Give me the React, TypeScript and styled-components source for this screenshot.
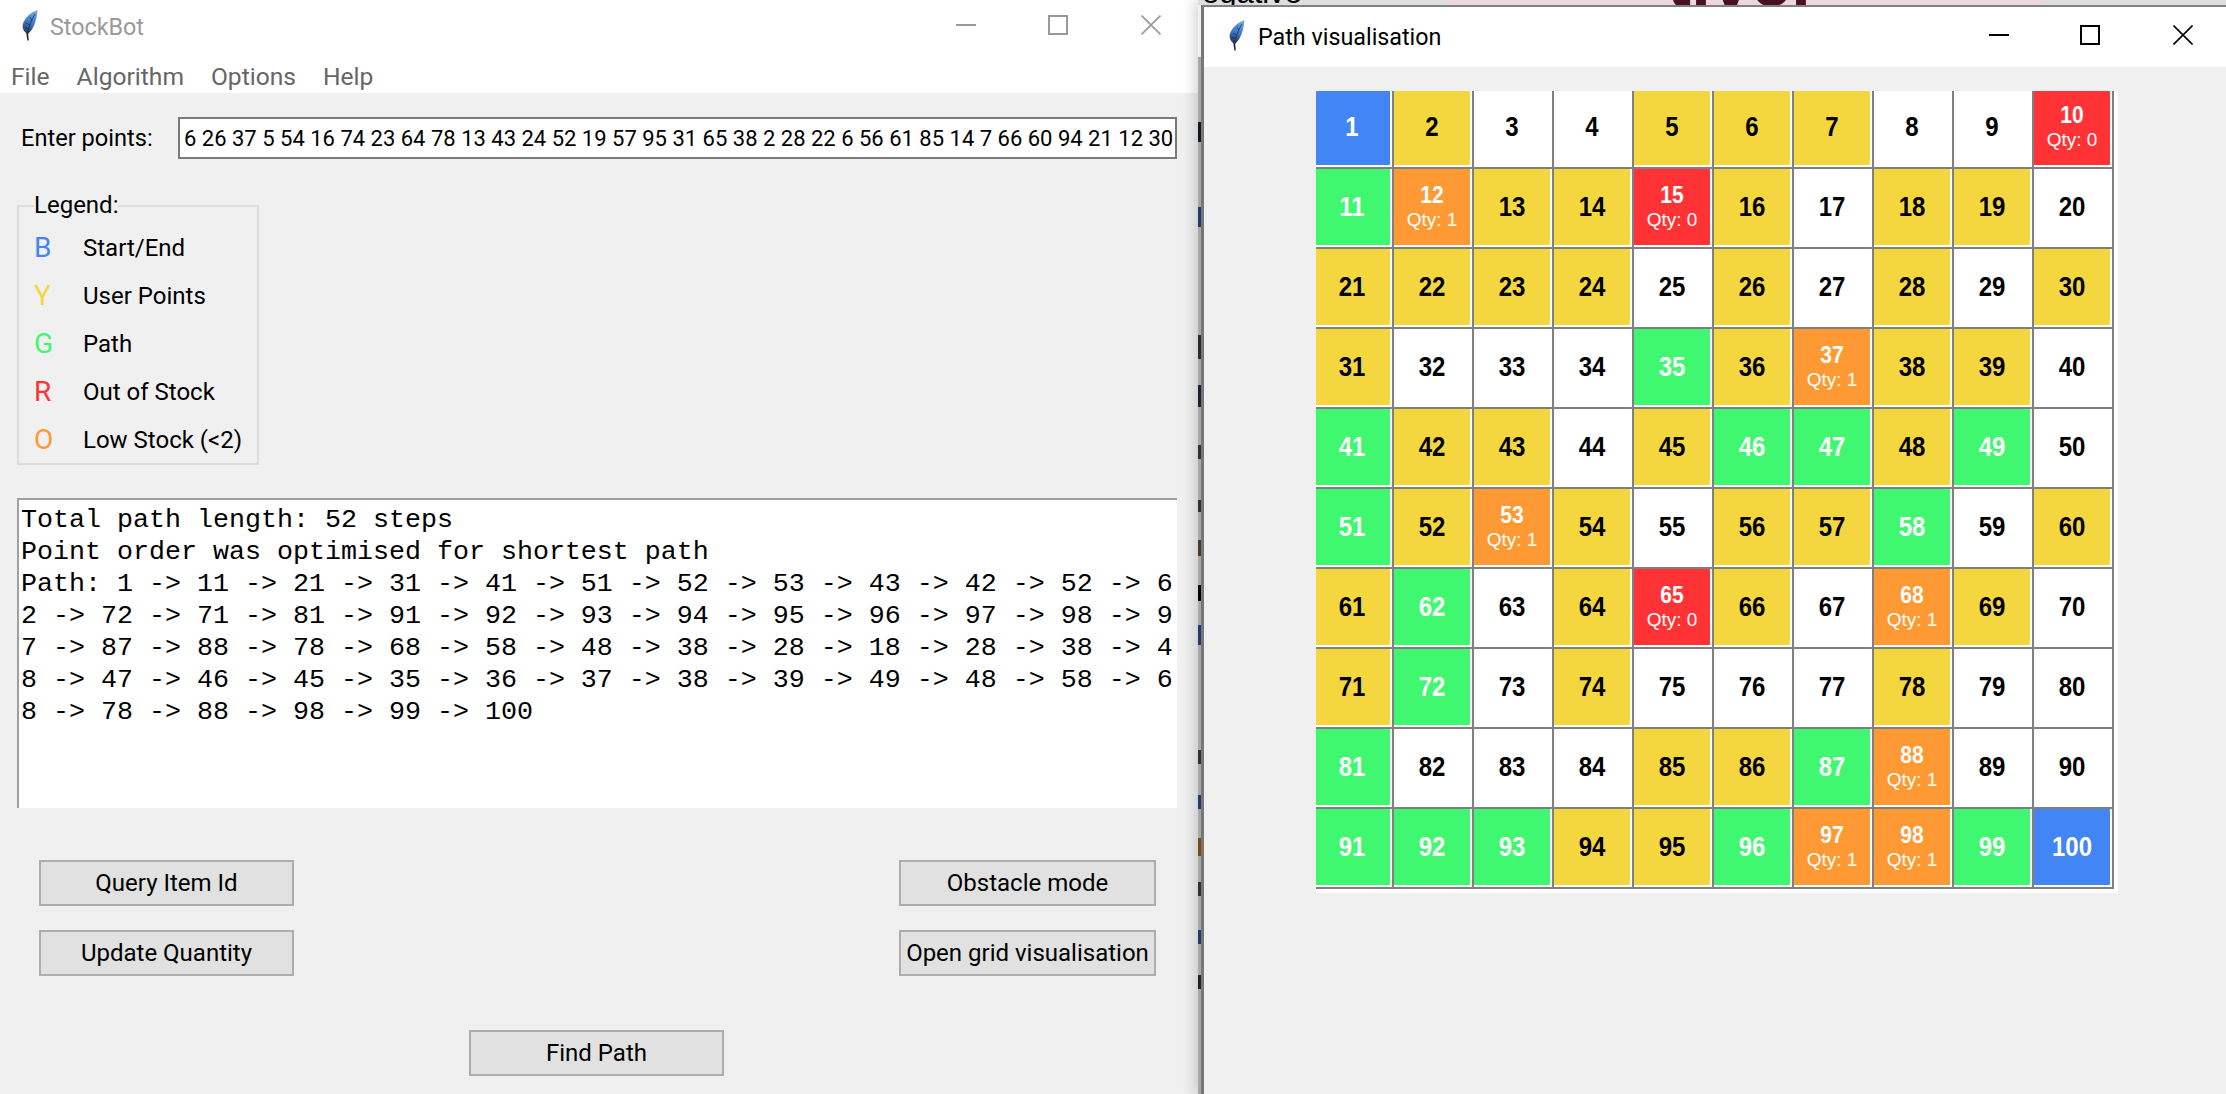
import React, { useId } from 'react';
import styled, { createGlobalStyle } from 'styled-components';

const Global = createGlobalStyle`
  html, body { margin: 0; padding: 0; width: 2226px; height: 1094px; overflow: hidden; background: #f0f0f0; }
  #root { width: 2226px; height: 1094px; }
  * { box-sizing: border-box; }
`;

const UI_FONT = `Roboto, "Open Sans", "Liberation Sans", sans-serif`;
const COLORS = { b: '#4285f5', y: '#f4d63e', g: '#40f870', r: '#ff3336', o: '#ff9933', w: '#ffffff' } as const;
type Kind = keyof typeof COLORS;

const Desktop = styled.div`
  display: flex;
  width: 2226px;
  height: 1094px;
  font-family: ${UI_FONT};
  overflow: hidden;
`;

const MainWindow = styled.div`
  width: 1198px;
  height: 100%;
  display: flex;
  flex-direction: column;
  background: #f0f0f0;
`;

const TitleBar = styled.div<{ $height: number; $inset: number; $gap: number; $lift: number; $dim?: boolean }>`
  flex: none;
  height: ${(p) => p.$height}px;
  padding-left: ${(p) => p.$inset}px;
  padding-bottom: ${(p) => p.$lift}px;
  background: #fff;
  display: flex;
  align-items: center;
  gap: ${(p) => p.$gap}px;
  color: ${(p) => (p.$dim ? '#999999' : '#000000')};
  font-size: 23.3px;
`;

const FeatherBox = styled.span`
  display: flex;
  margin-bottom: 4px;
`;

const TitleText = styled.span`
  flex: 1;
  white-space: nowrap;
`;

const Controls = styled.div<{ $pad: number }>`
  display: flex;
  align-items: center;
  padding-right: ${(p) => p.$pad}px;
  margin-bottom: 4px;
`;

const ControlSlot = styled.span<{ $margin: number }>`
  display: flex;
  width: 20px;
  height: 20px;
  margin-left: ${(p) => p.$margin}px;
`;

const MenuBar = styled.div`
  flex: none;
  height: 33px;
  background: #fff;
  padding-left: 11px;
  display: flex;
  align-items: center;
  gap: 27px;
  color: #666666;
  font-size: 24.6px;
`;

const Body = styled.div`
  flex: 1;
  display: flex;
  flex-direction: column;
`;

const InputRow = styled.div`
  margin-top: 24px;
  height: 42px;
  display: flex;
  align-items: center;
  padding-left: 21px;
  font-size: 23.6px;
  color: #000;
`;

const InputLabel = styled.label`
  width: 157px;
  white-space: nowrap;
`;

const PointsInput = styled.div`
  width: 999px;
  height: 42px;
  border: 2px solid #7a7a7a;
  background: #fff;
  padding-left: 4px;
  display: flex;
  align-items: center;
  white-space: nowrap;
  overflow: hidden;
  font-size: 22px;
`;

const LegendBox = styled.fieldset`
  margin: 33px 0 0 17px;
  padding: 12px 0 12px 15px;
  width: 242px;
  border: 2px solid #dcdcdc;
  font-size: 24px;
  color: #000;
`;

const LegendTitle = styled.legend`
  margin-left: 0;
  padding: 0;
  line-height: 27px;
`;

const LegendList = styled.div`
  display: flex;
  flex-direction: column;
  gap: 20px;
`;

const LegendRow = styled.div`
  height: 28px;
  display: grid;
  grid-template-columns: 49px 1fr;
  align-items: center;
  white-space: nowrap;
`;

const LegendKey = styled.span<{ $kind: Kind }>`
  color: ${(p) => COLORS[p.$kind]};
  font-size: 28px;
`;

const Output = styled.div`
  margin: 33px 0 0 17px;
  width: 1160px;
  height: 310px;
  background: #fff;
  border-top: 2px solid #a0a0a0;
  border-left: 2px solid #a0a0a0;
  padding: 4px 0 0 2px;
  overflow: hidden;
  font-family: "Liberation Mono", "Courier New", monospace;
  font-size: 26.67px;
  line-height: 32px;
  color: #000;
  white-space: pre;
`;

const ActionGrid = styled.div`
  margin-top: 52px;
  padding: 0 42px 0 39px;
  display: flex;
  justify-content: space-between;
`;

const ActionColumn = styled.div`
  display: flex;
  flex-direction: column;
  gap: 24px;
`;

const ActionButton = styled.button<{ $wide?: boolean }>`
  width: ${(p) => (p.$wide ? 257 : 255)}px;
  height: 46px;
  padding: 0;
  background: #e1e1e1;
  border: 2px solid #adadad;
  font-family: ${UI_FONT};
  font-size: 24px;
  color: #000;
  white-space: nowrap;
`;

const FindRow = styled.div`
  margin-top: 54px;
  padding-left: 469px;
`;

const RightColumn = styled.div`
  position: relative;
  width: 1028px;
  height: 100%;
  display: flex;
  flex-direction: column;
  box-shadow: -4px 0 12px rgba(0, 0, 0, 0.16);
`;

const BehindStrip = styled.div`
  flex: none;
  height: 5px;
  display: flex;
  overflow: hidden;
`;

const BehindPage = styled.div<{ $w: number; $bg: string; $pad: number }>`
  flex: none;
  width: ${(p) => p.$w}px;
  height: 5px;
  padding-left: ${(p) => p.$pad}px;
  background: ${(p) => p.$bg};
  overflow: hidden;
`;

const BehindText = styled.div`
  margin-top: -22px;
  font-family: "Liberation Sans", sans-serif;
  font-size: 31px;
  line-height: 30px;
  color: #000;
  white-space: nowrap;
`;

const BehindHeading = styled.div`
  margin-top: -44px;
  font-family: "Liberation Sans", sans-serif;
  font-weight: 700;
  font-size: 72px;
  line-height: 50px;
  color: #4a1028;
  white-space: nowrap;
`;

const Sliver = styled.div`
  position: absolute;
  left: 0;
  top: 57px;
  bottom: 0;
  width: 3px;
  background: #a8a8a8;
  overflow: hidden;
`;

const SliverTick = styled.i<{ $top: number; $h: number; $c: string }>`
  position: absolute;
  left: 0;
  width: 3px;
  top: ${(p) => p.$top - 57}px;
  height: ${(p) => p.$h}px;
  background: ${(p) => p.$c};
`;

const VisualWindow = styled.div`
  flex: 1;
  margin-left: 3px;
  border-top: 2px solid #808080;
  border-left: 3px solid #777777;
  background: #f0f0f0;
  display: flex;
  flex-direction: column;
`;

const CanvasArea = styled.div`
  padding: 24px 0 0 112px;
`;

const GridCanvas = styled.div`
  width: 802px;
  height: 802px;
  background: #fff;
  overflow: hidden;
`;

const CellGrid = styled.div`
  margin: -2px;
  display: grid;
  grid-template-columns: repeat(10, 80px);
  grid-auto-rows: 80px;
`;

const Cell = styled.div`
  padding: 0 2px 2px 0;
  border-right: 2px solid #808080;
  border-bottom: 2px solid #808080;
  background: #fff;
`;

const CellFill = styled.div<{ $kind: Kind }>`
  width: 100%;
  height: 100%;
  background: ${(p) => COLORS[p.$kind]};
  color: ${(p) => (p.$kind === 'y' || p.$kind === 'w' ? '#000' : '#fff')};
  display: flex;
  flex-direction: column;
  align-items: center;
  justify-content: center;
  font-family: "Liberation Sans", Arial, sans-serif;
`;

const CellNumber = styled.span<{ $small?: boolean }>`
  display: block;
  transform: scaleY(1.12);
  font-weight: 700;
  font-size: ${(p) => (p.$small ? 21 : 24)}px;
  line-height: ${(p) => (p.$small ? 25 : 28)}px;
`;

const CellQty = styled.span`
  font-size: 19px;
  line-height: 25px;
`;

function Feather() {
  const id = useId();
  return (
    <FeatherBox>
      <svg width="18" height="32" viewBox="0 0 18 32" fill="none">
        <defs>
          <linearGradient id={id} x1="14" y1="0" x2="4" y2="26" gradientUnits="userSpaceOnUse">
            <stop offset="0" stopColor="#7fb0e8" />
            <stop offset="0.55" stopColor="#3a74c4" />
            <stop offset="1" stopColor="#23282f" />
          </linearGradient>
        </defs>
        <path d="M16.5 1C10 3 3.5 9 1.8 15.5C1 19 3 22.5 5.2 24L6.4 31.5L7.8 31.5L7.2 24.5C12 21 15.8 12 16.5 1Z" fill={`url(#${id})`} />
        <path d="M14 5C10 11 7.5 18 6.8 25M5 14L8.5 16M4 18L7.6 20M9 8L11 11" stroke="#1d2a3d" strokeWidth="1" opacity="0.7" />
      </svg>
    </FeatherBox>
  );
}

function WinIcon({ kind, color }: { kind: 'min' | 'max' | 'close'; color: string }) {
  return (
    <svg width="20" height="20" viewBox="0 0 20 20" fill="none" stroke={color} strokeWidth="2">
      {kind === 'min' && <path d="M0 10H20" />}
      {kind === 'max' && <rect x="1" y="1" width="18" height="18" />}
      {kind === 'close' && <path d="M0.5 0.5L19.5 19.5M19.5 0.5L0.5 19.5" strokeWidth="1.6" />}
    </svg>
  );
}

const LEGEND: [Kind, string, string][] = [
  ['b', 'B', 'Start/End'],
  ['y', 'Y', 'User Points'],
  ['g', 'G', 'Path'],
  ['r', 'R', 'Out of Stock'],
  ['o', 'O', 'Low Stock (<2)'],
];

const OUTPUT = [
  'Total path length: 52 steps',
  'Point order was optimised for shortest path',
  'Path: 1 -> 11 -> 21 -> 31 -> 41 -> 51 -> 52 -> 53 -> 43 -> 42 -> 52 -> 6',
  '2 -> 72 -> 71 -> 81 -> 91 -> 92 -> 93 -> 94 -> 95 -> 96 -> 97 -> 98 -> 9',
  '7 -> 87 -> 88 -> 78 -> 68 -> 58 -> 48 -> 38 -> 28 -> 18 -> 28 -> 38 -> 4',
  '8 -> 47 -> 46 -> 45 -> 35 -> 36 -> 37 -> 38 -> 39 -> 49 -> 48 -> 58 -> 6',
  '8 -> 78 -> 88 -> 98 -> 99 -> 100',
].join('\n');

const MAP = [
  'bywwyyywwr',
  'goyyrywyyw',
  'yyyywywywy',
  'ywwwgyoyyw',
  'gyywyggygw',
  'gyoywyygwy',
  'ygwyrywoyw',
  'ygwywwwyww',
  'gwwwyygoww',
  'gggyygoogb',
];

const TICKS: [number, number, string][] = [
  [122, 20, '#101820'], [207, 20, '#1f3a70'], [335, 24, '#2a2a2a'], [385, 22, '#1a2030'], [445, 14, '#303030'],
  [500, 12, '#303030'], [540, 16, '#4a3a2a'], [585, 16, '#000000'], [625, 20, '#1f3a70'], [750, 14, '#303030'],
  [795, 14, '#1f3a70'], [838, 18, '#7a4a10'], [882, 14, '#303030'], [930, 14, '#1f3a70'], [975, 14, '#202020'],
];

export default function App() {
  return (
    <Desktop>
      <Global />
      <MainWindow>
        <TitleBar $height={60} $inset={21} $gap={11} $lift={6} $dim>
          <Feather />
          <TitleText>StockBot</TitleText>
          <Controls $pad={37}>
            <ControlSlot $margin={0}><WinIcon kind="min" color="#999999" /></ControlSlot>
            <ControlSlot $margin={72}><WinIcon kind="max" color="#999999" /></ControlSlot>
            <ControlSlot $margin={73}><WinIcon kind="close" color="#999999" /></ControlSlot>
          </Controls>
        </TitleBar>
        <MenuBar>
          <span>File</span>
          <span>Algorithm</span>
          <span>Options</span>
          <span>Help</span>
        </MenuBar>
        <Body>
          <InputRow>
            <InputLabel>Enter points:</InputLabel>
            <PointsInput>6 26 37 5 54 16 74 23 64 78 13 43 24 52 19 57 95 31 65 38 2 28 22 6 56 61 85 14 7 66 60 94 21 12 30</PointsInput>
          </InputRow>
          <LegendBox>
            <LegendTitle>Legend:</LegendTitle>
            <LegendList>
              {LEGEND.map(([k, key, label]) => (
                <LegendRow key={k}>
                  <LegendKey $kind={k}>{key}</LegendKey>
                  <span>{label}</span>
                </LegendRow>
              ))}
            </LegendList>
          </LegendBox>
          <Output>{OUTPUT}</Output>
          <ActionGrid>
            <ActionColumn>
              <ActionButton>Query Item Id</ActionButton>
              <ActionButton>Update Quantity</ActionButton>
            </ActionColumn>
            <ActionColumn>
              <ActionButton $wide>Obstacle mode</ActionButton>
              <ActionButton $wide>Open grid visualisation</ActionButton>
            </ActionColumn>
          </ActionGrid>
          <FindRow>
            <ActionButton>Find Path</ActionButton>
          </FindRow>
        </Body>
      </MainWindow>
      <RightColumn>
        <BehindStrip>
          <BehindPage $w={247} $bg="#dedede" $pad={4}><BehindText>egative</BehindText></BehindPage>
          <BehindPage $w={600} $bg="#ead8de" $pad={222}><BehindHeading>tiver</BehindHeading></BehindPage>
          <BehindPage $w={181} $bg="#dddddd" $pad={0} />
        </BehindStrip>
        <Sliver>
          {TICKS.map(([top, h, c]) => (
            <SliverTick key={top} $top={top} $h={h} $c={c} />
          ))}
        </Sliver>
        <VisualWindow>
          <TitleBar $height={60} $inset={24} $gap={12} $lift={0}>
            <Feather />
            <TitleText>Path visualisation</TitleText>
            <Controls $pad={33}>
              <ControlSlot $margin={0}><WinIcon kind="min" color="#000000" /></ControlSlot>
              <ControlSlot $margin={71}><WinIcon kind="max" color="#000000" /></ControlSlot>
              <ControlSlot $margin={73}><WinIcon kind="close" color="#000000" /></ControlSlot>
            </Controls>
          </TitleBar>
          <CanvasArea>
            <GridCanvas>
              <CellGrid>
                {MAP.join('').split('').map((c, i) => {
                  const kind = c as Kind;
                  const low = kind === 'o' || kind === 'r';
                  return (
                    <Cell key={i}>
                      <CellFill $kind={kind}>
                        <CellNumber $small={low}>{i + 1}</CellNumber>
                        {low && <CellQty>Qty: {kind === 'o' ? 1 : 0}</CellQty>}
                      </CellFill>
                    </Cell>
                  );
                })}
              </CellGrid>
            </GridCanvas>
          </CanvasArea>
        </VisualWindow>
      </RightColumn>
    </Desktop>
  );
}
